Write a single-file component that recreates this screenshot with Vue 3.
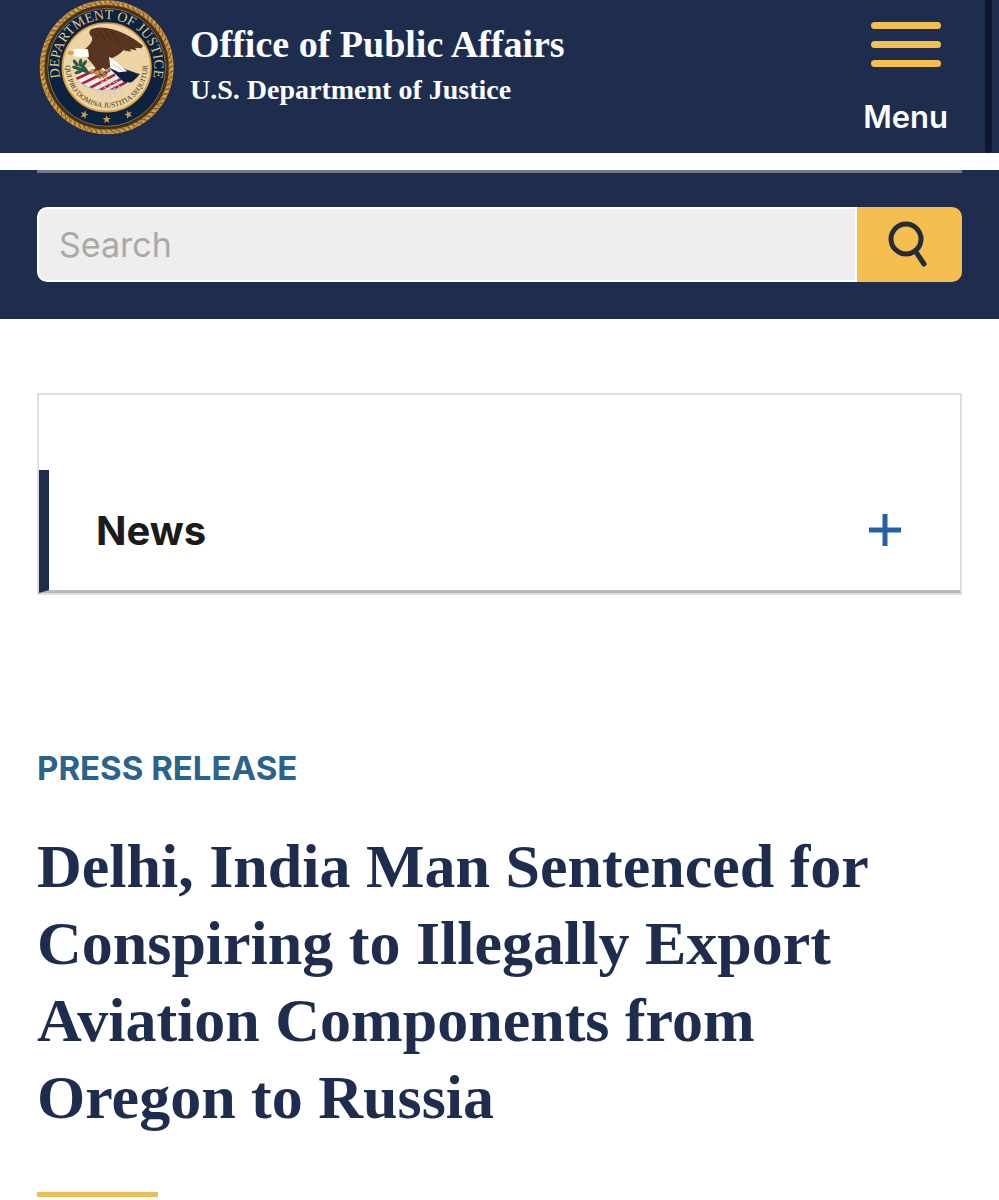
<template>
  <div class="page">
    <!-- Header -->
    <header class="site-header">
      <a class="brand" href="#">
        <svg class="seal" viewBox="27 0 405 405" role="img" aria-label="Department of Justice seal">
          <defs>
            <path id="seal-top" d="M 92.5 240 A 143 143 0 1 1 367.5 240" />
            <path id="seal-bottom" d="M 109 178 A 123 123 0 1 0 351 178" />
            <clipPath id="shield-clip">
              <path d="M136 232 C160 215 180 195 240 182 C275 205 305 215 330 222 C300 260 260 272 215 270 C175 266 150 250 136 232 Z" />
            </clipPath>
          </defs>

          <!-- Rope and rings -->
          <circle cx="230" cy="202" r="201" fill="#a87a30" />
          <circle cx="230" cy="202" r="194" fill="none" stroke="#d3a04a" stroke-width="12" stroke-dasharray="10 4" />
          <g stroke="#7d5722" stroke-width="3" stroke-linecap="round">
            <line v-for="n in 72" :key="n" x1="224" y1="4" x2="236" y2="16" :transform="`rotate(${n * 5} 230 202)`" />
          </g>
          <circle cx="230" cy="202" r="182" fill="#0d2140" stroke="#4a3016" stroke-width="8" />
          <circle cx="230" cy="202" r="177" fill="none" stroke="#b99a55" stroke-width="2" />
          <circle cx="230" cy="202" r="133" fill="#edd4a4" stroke="#d19a3c" stroke-width="5" />

          <!-- Shield -->
          <path d="M136 232 C145 252 175 270 215 272 C262 274 308 258 330 222 L318 218 L230 250 Z" fill="#b9bcc4" />
          <g clip-path="url(#shield-clip)">
            <rect x="130" y="175" width="210" height="105" fill="#f3eee9" />
            <g stroke="#a82538" stroke-width="8">
              <path d="M128 220 L198 185" />
              <path d="M134 239 L220 199" />
              <path d="M146 256 L240 210" />
              <path d="M172 268 L255 224" />
              <path d="M205 273 L276 235" />
              <path d="M238 273 L290 246" />
            </g>
            <path d="M238 205 L270 188 L335 218 L312 248 L282 247 Z" fill="#10213f" />
          </g>
          <g fill="none" stroke="#c8cbd1" stroke-width="6" stroke-dasharray="3 3">
            <path d="M220 237 L202 283" />
            <path d="M231 237 L217 291" />
            <path d="M241 238 L238 298" />
            <path d="M251 240 L256 293" />
            <path d="M259 243 L277 283" />
          </g>

          <!-- Olive branch -->
          <g fill="#235b49">
            <ellipse cx="137" cy="189" rx="12" ry="5" transform="rotate(55 137 189)" />
            <ellipse cx="151" cy="188" rx="12" ry="5" transform="rotate(100 151 188)" />
            <ellipse cx="163" cy="190" rx="11" ry="5" transform="rotate(130 163 190)" />
            <ellipse cx="140" cy="204" rx="14" ry="5" transform="rotate(15 140 204)" />
            <ellipse cx="146" cy="216" rx="13" ry="5" transform="rotate(-20 146 216)" />
            <ellipse cx="163" cy="211" rx="14" ry="6" transform="rotate(20 163 211)" />
            <ellipse cx="160" cy="202" rx="14" ry="5" transform="rotate(40 160 202)" />
          </g>

          <!-- Eagle -->
          <path d="M165 148 C176 137 190 125 186 112 C178 104 174 95 185 87 C202 79 230 82 247 88 C280 96 312 115 339 137 L334 145 L315 143 L320 151 L299 148 L304 155 L280 151 C270 164 257 169 246 175 L240 202 L228 211 L218 202 L209 213 L198 207 C190 191 176 181 171 170 Z" fill="#593420" />
          <path d="M188 96 L207 114 M204 91 L226 120 M223 90 L247 123 M243 94 L270 130" fill="none" stroke="#472718" stroke-width="3" />
          <path d="M122 156 C125 148 143 143 174 148 L177 170 C163 174 143 169 130 169 Z" fill="#fffdf8" />
          <path d="M112 160 C114 152 122 151 132 154 L130 164 L118 165 Z" fill="#d9a34a" />
          <path d="M237 170 C252 176 261 190 292 214 L267 217 L241 205 Z" fill="#fffdf8" />
          <path d="M248 191 L277 211" stroke="#c4c5c6" stroke-width="3" />
          <g fill="#c49548">
            <circle cx="187" cy="214" r="7" />
            <circle cx="200" cy="220" r="7" />
            <circle cx="214" cy="216" r="7" />
            <circle cx="225" cy="225" r="7" />
            <circle cx="209" cy="231" r="6" />
            <circle cx="231" cy="211" r="5" />
          </g>
          <path d="M184 222 L202 209 L222 235 M204 232 L233 219" fill="none" stroke="#6b4422" stroke-width="3" />

          <!-- Lettering -->
          <text class="seal-name">
            <textPath href="#seal-top" startOffset="50%" text-anchor="middle">DEPARTMENT OF JUSTICE</textPath>
          </text>
          <text class="seal-motto">
            <textPath href="#seal-bottom" startOffset="50%" text-anchor="middle">QUI PRO DOMINA JUSTITIA SEQUITUR</textPath>
          </text>
          <path v-for="s in stars" :key="s.x" :transform="`translate(${s.x} ${s.y}) rotate(${s.turn})`" d="M0 -13 L3 -4 L12 -4 L5 2 L8 11 L0 6 L-8 11 L-5 2 L-12 -4 L-3 -4 Z" fill="#c89a4c" />
        </svg>
        <span class="brand-text">
          <span class="brand-office">Office of Public Affairs</span>
          <span class="brand-dept">U.S. Department of Justice</span>
        </span>
      </a>

      <button class="menu-btn" type="button" :aria-expanded="menuOpen" @click="menuOpen = !menuOpen">
        <span class="menu-bars">
          <span class="menu-bar" />
          <span class="menu-bar" />
          <span class="menu-bar" />
        </span>
        Menu
      </button>
      <span class="header-edge" />
    </header>

    <!-- Search -->
    <section class="search-band">
      <form class="search-form" role="search" @submit.prevent>
        <input v-model="query" class="search-input" type="search" placeholder="Search" aria-label="Search" />
        <button class="search-btn" type="submit" aria-label="Submit search">
          <svg width="48" height="48" viewBox="0 0 48 48" fill="none" stroke="#252b37" stroke-width="5" stroke-linecap="round">
            <circle cx="20" cy="18" r="15" />
            <line x1="30" y1="31" x2="38" y2="43" />
          </svg>
        </button>
      </form>
    </section>

    <main class="content">
      <!-- Section navigation -->
      <nav class="side-nav" aria-label="Section">
        <button class="side-nav-item" type="button" :aria-expanded="newsOpen" @click="newsOpen = !newsOpen">
          News
          <svg width="34" height="34" viewBox="0 0 34 34" fill="none" stroke="#2460a7" stroke-width="5">
            <line x1="1" y1="17" x2="33" y2="17" />
            <line v-if="!newsOpen" x1="17" y1="1" x2="17" y2="33" />
          </svg>
        </button>
      </nav>

      <!-- Article -->
      <article>
        <p class="kicker">PRESS RELEASE</p>
        <h1 class="headline">Delhi, India Man Sentenced for Conspiring to Illegally Export Aviation Components from Oregon to Russia</h1>
        <hr class="rule" />
      </article>
    </main>
  </div>
</template>

<script setup>
import { ref } from 'vue'

const query = ref('')
const menuOpen = ref(false)
const newsOpen = ref(false)

const stars = [
  { x: 163, y: 344, turn: 20 },
  { x: 230, y: 358, turn: 0 },
  { x: 295, y: 343, turn: -20 },
]
</script>

<style>
body {
  margin: 0;
  background: #fff;
}
</style>

<style scoped>
.page {
  font-family: Inter, "Liberation Sans", sans-serif;
  color: #1b1b1b;
}

button {
  border: none;
  background: none;
  padding: 0;
  font-family: inherit;
  cursor: pointer;
}

/* ── Header ── */
.site-header {
  display: flex;
  align-items: flex-start;
  background: #1e2d4e;
  margin-bottom: 17px;
}

.brand {
  display: flex;
  flex: 1;
  padding: 0 0 18px 39px;
  gap: 16px;
  color: #fafcff;
  text-decoration: none;
}

.seal {
  width: 135px;
  height: 135px;
  flex-shrink: 0;
}

.seal-name {
  font-family: "Liberation Serif", serif;
  font-size: 42px;
  fill: #ddc58b;
}

.seal-motto {
  font-family: "Liberation Serif", serif;
  font-size: 22px;
  fill: #3c352c;
}

.brand-text {
  display: flex;
  flex-direction: column;
  padding-top: 20px;
  font-family: "Liberation Serif", serif;
  font-weight: 700;
  white-space: nowrap;
}

.brand-office {
  font-size: 38px;
  line-height: 48px;
}

.brand-dept {
  font-size: 28px;
  line-height: 44px;
}

.menu-btn {
  display: flex;
  flex-direction: column;
  align-items: center;
  padding-top: 22px;
  margin-right: 37px;
  gap: 30px;
  color: #fafcff;
  font-size: 31px;
  line-height: 40px;
  font-weight: 600;
}

.menu-bars {
  display: flex;
  flex-direction: column;
  gap: 12px;
}

.menu-bar {
  width: 70px;
  height: 7px;
  border-radius: 4px;
  background: #f4be50;
}

.header-edge {
  align-self: stretch;
  width: 7px;
  margin-right: 7px;
  border-radius: 0 0 4px 4px;
  background: #0e1630;
}

/* ── Search ── */
.search-band {
  padding: 0 37px 37px;
  background: #1e2d4e;
}

.search-form {
  display: flex;
  border-top: 3px solid #727b8f;
  padding-top: 34px;
}

.search-input {
  flex: 1;
  min-width: 0;
  box-sizing: border-box;
  height: 75px;
  border: 2px solid #fff;
  border-radius: 10px 0 0 10px;
  padding: 0 20px;
  background: #eee;
  color: #1b1b1b;
  font-family: inherit;
  font-size: 34px;
  outline: none;
  appearance: none;
}

.search-input::placeholder {
  color: #a9a9a9;
}

.search-btn {
  display: flex;
  align-items: center;
  justify-content: center;
  width: 105px;
  border-radius: 0 10px 10px 0;
  background: #f5bf50;
}

/* ── Section navigation ── */
.content {
  padding: 74px 37px 3px;
}

.side-nav {
  border: 2px solid #dcdee0;
  padding-top: 75px;
}

.side-nav-item {
  display: flex;
  align-items: center;
  justify-content: space-between;
  box-sizing: border-box;
  width: 100%;
  height: 123px;
  border-left: 10px solid #1e2d4e;
  border-bottom: 3px solid #b8b9bb;
  padding: 0 58px 0 47px;
  color: #1b1b1b;
  font-size: 40px;
  font-weight: 700;
}

/* ── Article ── */
.kicker {
  margin: 153px 0 0;
  color: #2b638c;
  font-size: 33px;
  line-height: 40px;
  font-weight: 700;
}

.headline {
  margin: 40px 0 56px;
  color: #1e2d4e;
  font-family: "Liberation Serif", serif;
  font-size: 62px;
  line-height: 77px;
  font-weight: 700;
}

.rule {
  width: 121px;
  height: 5px;
  margin: 0;
  border: none;
  background: #eabd58;
}
</style>
